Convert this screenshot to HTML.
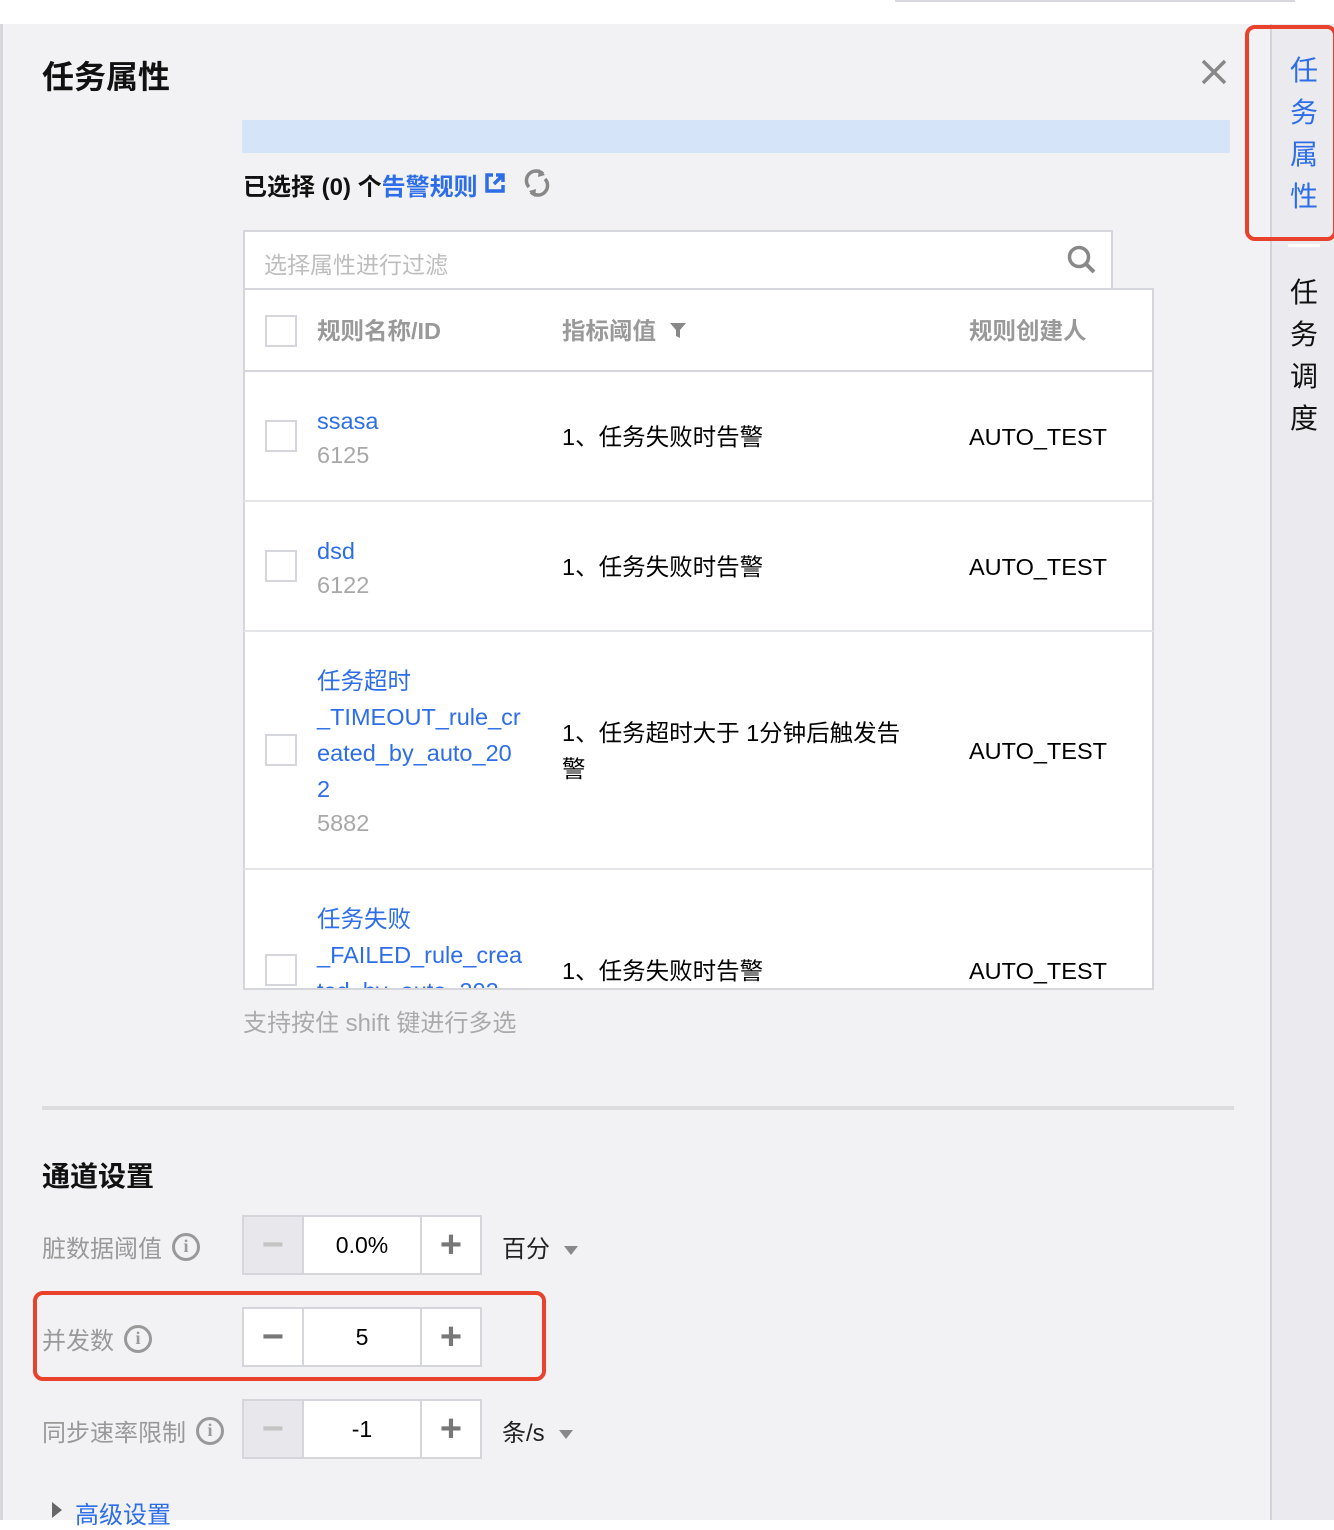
<!DOCTYPE html>
<html><head><meta charset="utf-8"><style>
*{margin:0;padding:0;box-sizing:border-box}
body{width:1334px;height:1520px;overflow:hidden;background:#fff;font-family:"Liberation Sans","Noto Sans CJK SC",sans-serif;position:relative;color:#000}
.a{position:absolute}
.panel{left:0;top:24px;width:1270px;height:1496px;background:#f2f2f4;border-left:3px solid #d6d8de}
.side{left:1270px;top:24px;width:64px;height:1496px;background:#ebebef;border-left:2px solid #d2d4da}
.blue{color:#2d6ee8}
.grey{color:#a8a8a8}
.cb{position:absolute;left:20px;width:32px;height:32px;border:2px solid #d4d6dc;background:#fff}
.tx{font-size:23.5px;line-height:36px}
.row{position:absolute;left:243px;width:911px;background:#fff;border-left:2px solid #d4d6dc;border-right:2px solid #d4d6dc;border-bottom:2px solid #e2e4e8}
.step{position:absolute;left:242px;width:240px;height:60px;border:2px solid #d4d6dc;background:#fff;display:flex}
.step div{display:flex;align-items:center;justify-content:center;font-size:23px}
.step .m{width:60px;border-right:2px solid #d4d6dc;font-size:38px;color:#777;font-weight:bold}
.step .dis{background:#e8e8ec;color:#c4c4c4}
.step .v{width:118px;border-right:2px solid #d4d6dc}
.step .p{width:58px;font-size:38px;color:#777;font-weight:bold}
.lbl{position:absolute;left:42px;font-size:24px;color:#999;display:flex;align-items:center;gap:10px}
.info{width:28px;height:28px;border:3px solid #999;border-radius:50%;font-size:18px;font-weight:bold;display:flex;align-items:center;justify-content:center;color:#999;font-family:"Liberation Serif",serif}
.tri{display:inline-block;width:0;height:0;border-left:7px solid transparent;border-right:7px solid transparent;border-top:9px solid #888;margin-left:14px;vertical-align:middle}
</style></head><body>
<div class="a" style="left:895px;top:0;width:400px;height:2px;background:#d6d8de"></div>
<div class="a panel"></div>
<div class="a side"></div>
<div class="a blue" style="left:1290px;top:50px;font-size:28px;line-height:42px;width:30px">任<br>务<br>属<br>性</div>
<div class="a" style="left:1290px;top:272px;font-size:28px;line-height:42px;width:30px;color:#111">任<br>务<br>调<br>度</div>
<div class="a" style="left:1288px;top:244px;width:32px;height:3px;background:#fff"></div>
<div class="a" style="left:1245px;top:25px;width:92px;height:216px;border:4px solid #e8412c;border-radius:10px"></div>

<div class="a" style="left:42px;top:52px;font-size:32px;font-weight:bold;color:#111">任务属性</div>
<svg class="a" style="left:1200px;top:58px" width="28" height="28"><path d="M3 3L25 25M25 3L3 25" stroke="#888" stroke-width="3.5"/></svg>
<div class="a" style="left:242px;top:120px;width:988px;height:33px;background:#d5e4f9"></div>
<div class="a" style="left:243px;top:167px;font-size:24px;font-weight:bold;color:#111">已选择 (0) 个<span class="blue">告警规则</span></div>
<svg class="a" style="left:484px;top:172px" width="22" height="22"><path d="M9 3H3v16h16v-6" fill="none" stroke="#2d6ee8" stroke-width="3.5"/><path d="M12 3h7v7M19 3L10 12" fill="none" stroke="#2d6ee8" stroke-width="3.5"/></svg>
<svg class="a" style="left:523px;top:167px" width="28" height="32"><path d="M20 7A9 9 0 0 0 6 20M8 25A9 9 0 0 0 22 12" fill="none" stroke="#888" stroke-width="3.5"/><path d="M16 2l6 6-7 2z M12 30l-6-6 7-2z" fill="#888"/></svg>

<div class="a" style="left:243px;top:230px;width:870px;height:60px;background:#fff;border:2px solid #d4d6dc"></div>
<div class="a" style="left:264px;top:246px;font-size:23px;color:#bdbdbd">选择属性进行过滤</div>
<svg class="a" style="left:1066px;top:244px" width="32" height="32"><circle cx="13" cy="13" r="9.5" fill="none" stroke="#888" stroke-width="3.5"/><path d="M20 20l8 8" stroke="#888" stroke-width="4"/></svg>

<div class="row" style="top:288px;height:84px;border-top:2px solid #d4d6dc;border-bottom:2px solid #d4d6dc">
<div class="cb" style="top:25px"></div>
<div class="a tx" style="left:72px;top:23px;font-weight:bold;color:#999">规则名称/ID</div>
<div class="a tx" style="left:317px;top:23px;font-weight:bold;color:#999">指标阈值</div>
<svg class="a" style="left:424px;top:32px" width="18" height="18"><path d="M1 1h16l-6 7v8l-4-2V8z" fill="#888"/></svg>
<div class="a tx" style="left:724px;top:23px;font-weight:bold;color:#999">规则创建人</div>
</div>

<div class="row" style="top:372px;height:130px">
<div class="cb" style="top:48px"></div>
<div class="a tx blue" style="left:72px;top:31px">ssasa</div>
<div class="a tx grey" style="left:72px;top:65px">6125</div>
<div class="a tx" style="left:317px;top:47px">1、任务失败时告警</div>
<div class="a tx" style="left:724px;top:47px">AUTO_TEST</div>
</div>
<div class="row" style="top:502px;height:130px">
<div class="cb" style="top:48px"></div>
<div class="a tx blue" style="left:72px;top:31px">dsd</div>
<div class="a tx grey" style="left:72px;top:65px">6122</div>
<div class="a tx" style="left:317px;top:47px">1、任务失败时告警</div>
<div class="a tx" style="left:724px;top:47px">AUTO_TEST</div>
</div>
<div class="row" style="top:632px;height:238px">
<div class="cb" style="top:102px"></div>
<div class="a tx blue" style="left:72px;top:31px;width:220px">任务超时<br>_TIMEOUT_rule_cr<br>eated_by_auto_20<br>2</div>
<div class="a tx grey" style="left:72px;top:173px">5882</div>
<div class="a tx" style="left:317px;top:83px;width:360px">1、任务超时大于 1分钟后触发告<br>警</div>
<div class="a tx" style="left:724px;top:101px">AUTO_TEST</div>
</div>
<div class="row" style="top:870px;height:120px;overflow:hidden;border-bottom:2px solid #d4d6dc">
<div class="cb" style="top:84px"></div>
<div class="a tx blue" style="left:72px;top:31px;width:220px">任务失败<br>_FAILED_rule_crea<br>ted_by_auto_202</div>
<div class="a tx" style="left:317px;top:83px">1、任务失败时告警</div>
<div class="a tx" style="left:724px;top:83px">AUTO_TEST</div>
</div>
<div class="a" style="left:243px;top:1003px;font-size:24px;color:#aaa">支持按住 shift 键进行多选</div>

<div class="a" style="left:42px;top:1106px;width:1192px;height:4px;background:#dcdcdf"></div>
<div class="a" style="left:42px;top:1155px;font-size:28px;font-weight:bold;color:#111">通道设置</div>

<div class="lbl" style="top:1229px">脏数据阈值<div class="info">i</div></div>
<div class="step" style="top:1215px"><div class="m dis">−</div><div class="v">0.0%</div><div class="p">+</div></div>
<div class="a" style="left:502px;top:1229px;font-size:24px;color:#222">百分<span class="tri"></span></div>

<div class="lbl" style="top:1321px">并发数<div class="info">i</div></div>
<div class="step" style="top:1307px"><div class="m">−</div><div class="v">5</div><div class="p">+</div></div>
<div class="a" style="left:33px;top:1291px;width:513px;height:90px;border:4px solid #e8412c;border-radius:10px"></div>

<div class="lbl" style="top:1413px">同步速率限制<div class="info">i</div></div>
<div class="step" style="top:1399px"><div class="m dis">−</div><div class="v">-1</div><div class="p">+</div></div>
<div class="a" style="left:502px;top:1413px;font-size:24px;color:#222">条/s<span class="tri"></span></div>

<div class="a" style="left:52px;top:1502px;width:0;height:0;border-top:8px solid transparent;border-bottom:8px solid transparent;border-left:10px solid #666"></div>
<div class="a blue" style="left:75px;top:1495px;font-size:24px">高级设置</div>
</body></html>
